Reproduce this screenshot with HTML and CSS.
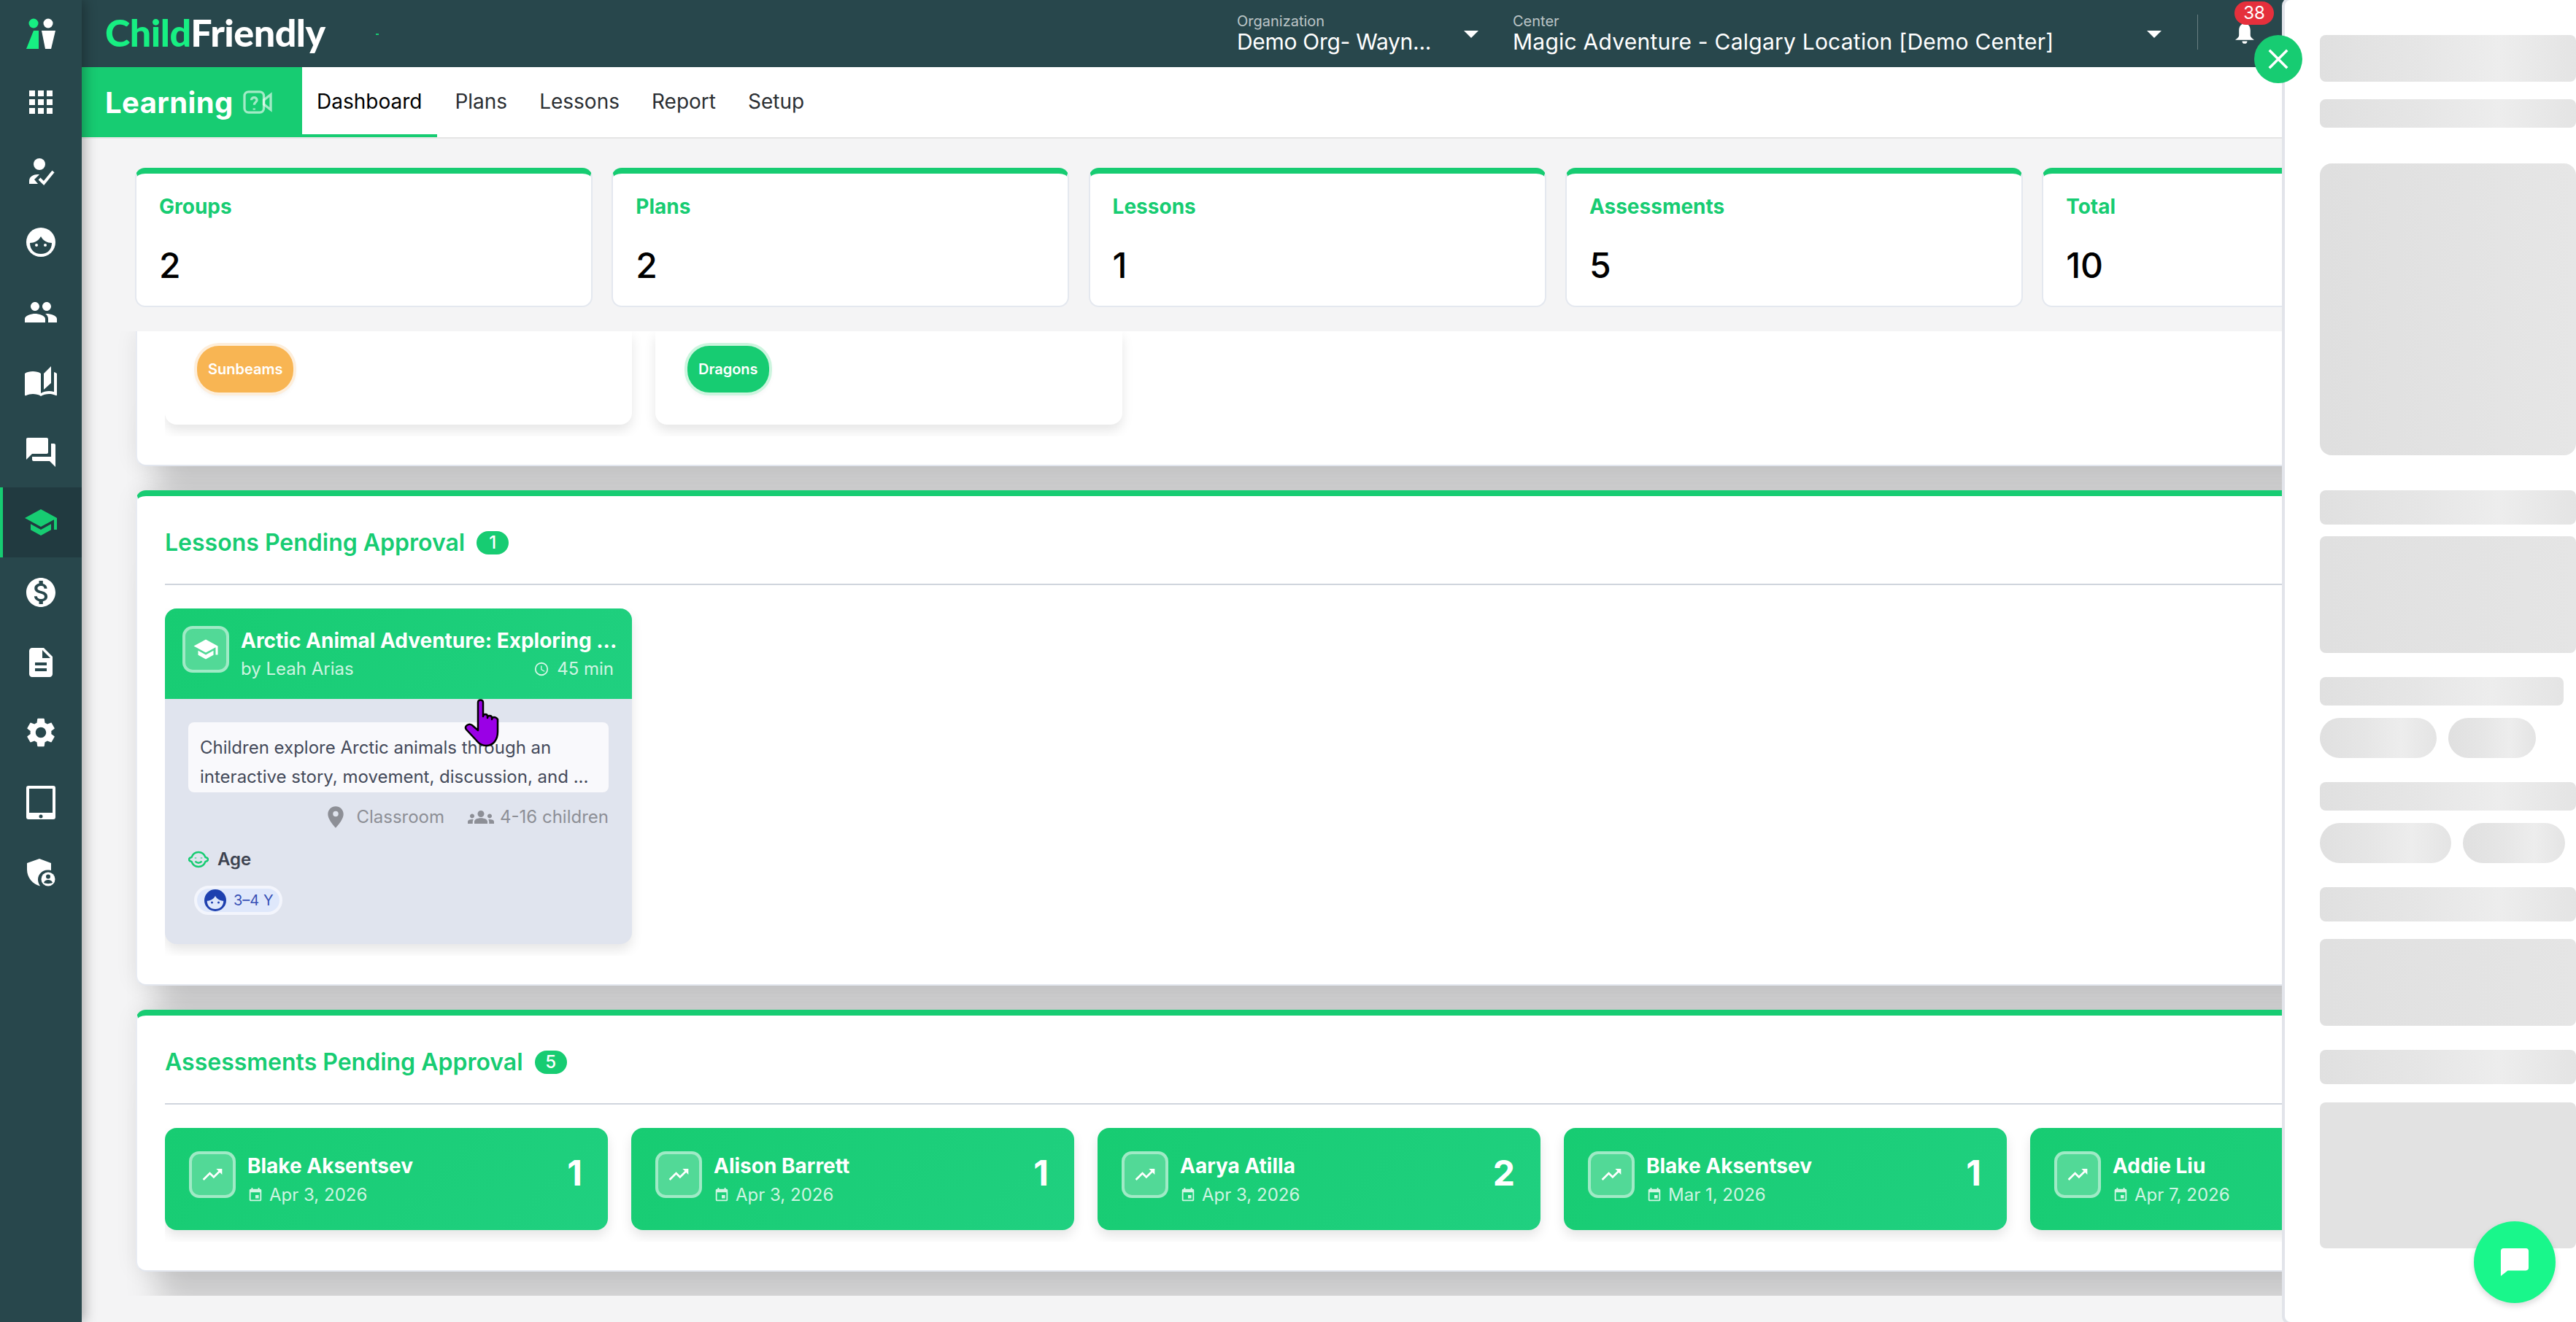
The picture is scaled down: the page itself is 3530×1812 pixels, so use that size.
FILE: index.html
```html
<!DOCTYPE html>
<html lang="en">
<head>
    <meta charset="UTF-8">
    <title>ChildFriendly - Learning Dashboard</title>
    <link rel="stylesheet" href="styles.css">
</head>
<body>
    <svg class="defs" aria-hidden="true">
        <symbol id="i-apps" viewBox="0 0 24 24"><path d="M4 8h4V4H4v4zm6 12h4v-4h-4v4zm-6 0h4v-4H4v4zm0-6h4v-4H4v4zm6 0h4v-4h-4v4zm6-10v4h4V4h-4zm-6 4h4V4h-4v4zm6 6h4v-4h-4v4zm0 6h4v-4h-4v4z"/></symbol>
        <symbol id="i-checkin" viewBox="0 0 40 40"><circle cx="18" cy="9" r="8"/><path d="M4 35v-3c0-6 6-9 12-9l2 .2-7 6.800 5 6H4z"/><path d="M18 29l6 6 13-16" fill="none" stroke="currentColor" stroke-width="4"/></symbol>
        <symbol id="i-face" viewBox="0 0 40 40"><ellipse cx="20" cy="20" rx="20" ry="20"/><path class="face-in" d="M5 21c6 0 12-3 15-9 3 6 9 9 15 9 0 9-6 15-15 15S5 30 5 21z"/><circle cx="14" cy="24" r="2"/><circle cx="26" cy="24" r="2"/></symbol>
        <symbol id="i-people" viewBox="0 0 24 24"><path d="M16 11c1.660 0 2.990-1.340 2.990-3S17.660 5 16 5c-1.660 0-3 1.340-3 3s1.340 3 3 3zm-8 0c1.660 0 2.990-1.340 2.990-3S9.660 5 8 5C6.340 5 5 6.340 5 8s1.340 3 3 3zm0 2c-2.330 0-7 1.170-7 3.500V19h14v-2.500c0-2.330-4.670-3.500-7-3.500zm8 0c-.29 0-.62.020-.97.050 1.160.84 1.970 1.970 1.970 3.450V19h6v-2.500c0-2.330-4.670-3.500-7-3.500z"/></symbol>
        <symbol id="i-book" viewBox="0 0 24 24"><path d="M19 1l-5 5v11l5-4.500V1zM1 6v14.650c0 .25.25.5.5.5.1 0 .15-.05.25-.05C3.100 20.450 5.050 20 6.500 20c1.950 0 4.050.4 5.500 1.500V6c-1.450-1.100-3.550-1.500-5.500-1.500S2.450 4.900 1 6zm22 13.500V6c-.6-.45-1.250-.75-2-1v13.500c-1.100-.35-2.300-.5-3.500-.5-1.700 0-4.150.65-5.500 1.500v2c1.350-.85 3.800-1.500 5.500-1.500 1.650 0 3.350.3 4.750 1.050.1.050.15.050.25.050.25 0 .5-.25.5-.5v-1.100z"/></symbol>
        <symbol id="i-forum" viewBox="0 0 24 24"><path d="M21 6h-2v9H6v2c0 .55.45 1 1 1h11l4 4V7c0-.55-.45-1-1-1zm-4 6V3c0-.55-.45-1-1-1H3c-.55 0-1 .45-1 1v14l4-4h10c.55 0 1-.45 1-1z"/></symbol>
        <symbol id="i-school" viewBox="0 0 24 24"><path d="M5 13.180v4L12 21l7-3.820v-4L12 17l-7-3.820zM12 3L1 9l11 6 9-4.910V17h2V9L12 3z"/></symbol>
        <symbol id="i-dollar" viewBox="0 0 24 24"><path d="M12 2C6.480 2 2 6.480 2 12s4.480 10 10 10 10-4.480 10-10S17.520 2 12 2zm1.410 16.090V20h-2.670v-1.930c-1.710-.36-3.160-1.460-3.270-3.400h1.960c.1 1.050.82 1.870 2.650 1.870 1.960 0 2.400-.98 2.400-1.590 0-.83-.44-1.610-2.670-2.140-2.480-.6-4.180-1.620-4.180-3.670 0-1.720 1.390-2.840 3.110-3.210V4h2.670v1.950c1.860.45 2.790 1.860 2.870 3.390H14.300c-.05-1.110-.64-1.870-2.220-1.870-1.500 0-2.400.68-2.400 1.640 0 .84.65 1.390 2.670 1.910s4.180 1.390 4.180 3.910c-.01 1.830-1.380 2.830-3.120 3.160z"/></symbol>
        <symbol id="i-doc" viewBox="0 0 24 24"><path d="M14 2H6c-1.100 0-1.990.9-1.990 2L4 20c0 1.100.89 2 1.990 2H18c1.100 0 2-.9 2-2V8l-6-6zm2 16H8v-2h8v2zm0-4H8v-2h8v2zm-3-5V3.500L18.500 9H13z"/></symbol>
        <symbol id="i-gear" viewBox="0 0 24 24"><path d="M19.140 12.940c.04-.3.060-.61.060-.94 0-.32-.02-.64-.07-.94l2.030-1.580c.18-.14.23-.41.12-.61l-1.920-3.320c-.12-.22-.37-.29-.59-.22l-2.390.96c-.5-.38-1.030-.7-1.620-.94l-.36-2.540c-.04-.24-.24-.41-.48-.41h-3.840c-.24 0-.43.17-.47.41l-.36 2.540c-.59.24-1.130.57-1.620.94l-2.390-.96c-.22-.08-.47 0-.59.22L2.740 8.870c-.12.21-.08.47.12.61l2.030 1.580c-.05.3-.09.63-.09.94s.02.64.07.94l-2.030 1.580c-.18.14-.23.41-.12.61l1.920 3.320c.12.22.37.29.59.22l2.390-.96c.5.38 1.030.7 1.620.94l.36 2.54c.05.24.24.41.48.41h3.840c.24 0 .44-.17.47-.41l.36-2.540c.59-.24 1.130-.56 1.620-.94l2.390.96c.22.08.47 0 .59-.22l1.920-3.320c.12-.22.07-.47-.12-.61l-2.010-1.580zM12 15.600c-1.980 0-3.600-1.620-3.600-3.600s1.620-3.600 3.600-3.600 3.600 1.620 3.600 3.600-1.620 3.600-3.600 3.600z"/></symbol>
        <symbol id="i-tablet" viewBox="0 0 40 48"><path fill-rule="evenodd" d="M3 1h34a3 3 0 0 1 3 3v40a3 3 0 0 1-3 3H3a3 3 0 0 1-3-3V4a3 3 0 0 1 3-3zm1 4v33h32V5H4zm16 35.500a2.500 2.500 0 1 0 0 5 2.500 2.500 0 0 0 0-5z"/></symbol>
        <symbol id="i-shield" viewBox="0 0 40 40"><path d="M18 1l16 6v10c-2-.5-3-.6-5-.6-7 0-13 6-13 13 0 3 1 6 3 9C9 36 1 27 1 16V7l17-6z"/><circle cx="30" cy="29" r="9.500"/><circle class="face-in" cx="30" cy="25.500" r="3"/><path class="face-in" d="M24 34c1-3 3-4 6-4s5 1 6 4c-3 1.500-9 1.500-12 0z"/></symbol>
        <symbol id="i-clock" viewBox="0 0 24 24"><path d="M12 2a10 10 0 1 0 0 20 10 10 0 0 0 0-20zm0 18a8 8 0 1 1 0-16 8 8 0 0 1 0 16zm.5-13H11v6l5.200 3.100.8-1.200-4.500-2.700V7z"/></symbol>
        <symbol id="i-pin" viewBox="0 0 24 24"><path d="M12 1C7.500 1 4 4.500 4 9c0 6 8 14 8 14s8-8 8-14c0-4.500-3.500-8-8-8zm0 10.500a2.800 2.800 0 1 1 0-5.600 2.800 2.800 0 0 1 0 5.600z"/></symbol>
        <symbol id="i-groups" viewBox="0 0 24 24"><path d="M12 12.750c1.630 0 3.070.39 4.240.9 1.080.48 1.760 1.560 1.760 2.730V18H6v-1.610c0-1.180.68-2.260 1.760-2.730 1.170-.52 2.610-.91 4.240-.91zM4 13c1.100 0 2-.9 2-2s-.9-2-2-2-2 .9-2 2 .9 2 2 2zm1.130 1.100c-.37-.06-.74-.1-1.130-.1-.99 0-1.930.21-2.780.58C.48 14.900 0 15.620 0 16.430V18h4.500v-1.610c0-.83.23-1.610.63-2.290zM20 13c1.100 0 2-.9 2-2s-.9-2-2-2-2 .9-2 2 .9 2 2 2zm4 3.430c0-.81-.48-1.530-1.220-1.850-.85-.37-1.790-.58-2.780-.58-.39 0-.76.040-1.130.1.4.68.63 1.460.63 2.290V18H24v-1.570zM12 6c1.660 0 3 1.340 3 3s-1.340 3-3 3-3-1.340-3-3 1.340-3 3-3z"/></symbol>
        <symbol id="i-event" viewBox="0 0 24 24"><path d="M17 12h-5v5h5v-5zM16 1v2H8V1H6v2H5c-1.100 0-2 .9-2 2v14c0 1.100.9 2 2 2h14c1.100 0 2-.9 2-2V5c0-1.100-.9-2-2-2h-1V1h-2zm3 18H5V8h14v11z"/></symbol>
        <symbol id="i-trend" viewBox="0 0 24 24"><path d="M16 6l2.290 2.290-4.880 4.880-4-4L2 16.590 3.410 18l6-6 4 4 6.300-6.290L22 12V6z"/></symbol>
    </svg>

    <aside class="sidebar">
        <div class="side-logo">
            <svg width="40" height="42" viewBox="0 0 40 42">
                <circle cx="10" cy="7" r="6.500" fill="#17ef82"/>
                <circle cx="30" cy="7" r="6.500" fill="#fff"/>
                <path d="M0 42L10 17h7v25z" fill="#17ef82"/>
                <path d="M21 17h19l-6 25h-8z" fill="#fff"/>
            </svg>
        </div>
        <a class="side-item"><svg class="ic-48"><use href="#i-apps"/></svg></a>
        <a class="side-item"><svg class="ic-40"><use href="#i-checkin"/></svg></a>
        <a class="side-item"><svg class="ic-40"><use href="#i-face"/></svg></a>
        <a class="side-item"><svg class="ic-48"><use href="#i-people"/></svg></a>
        <a class="side-item"><svg class="ic-48"><use href="#i-book"/></svg></a>
        <a class="side-item"><svg class="ic-48"><use href="#i-forum"/></svg></a>
        <a class="side-item active"><svg class="ic-48"><use href="#i-school"/></svg></a>
        <a class="side-item"><svg class="ic-48"><use href="#i-dollar"/></svg></a>
        <a class="side-item"><svg class="ic-48"><use href="#i-doc"/></svg></a>
        <a class="side-item"><svg class="ic-48"><use href="#i-gear"/></svg></a>
        <a class="side-item"><svg class="ic-tablet"><use href="#i-tablet"/></svg></a>
        <a class="side-item"><svg class="ic-40"><use href="#i-shield"/></svg></a>
    </aside>

    <div class="main">
        <header class="topbar">
            <div class="brand"><span class="brand-green">Child</span>Friendly</div>
            <span class="brand-speck"></span>
            <div class="selector selector-org">
                <div>
                    <div class="selector-label">Organization</div>
                    <div class="selector-value">Demo Org- Wayn...</div>
                </div>
                <span class="caret"></span>
            </div>
            <div class="selector selector-center">
                <div>
                    <div class="selector-label">Center</div>
                    <div class="selector-value">Magic Adventure - Calgary Location [Demo Center]</div>
                </div>
                <span class="caret"></span>
            </div>
            <div class="bell">
                <svg width="26" height="28" viewBox="0 0 30 32" fill="#fff"><path d="M15 0c6 0 9 5 9 11v8c0 3 3 5 6 7H0c3-2 6-4 6-7v-8C6 5 9 0 15 0z"/><path d="M11 28h8a4 4 0 0 1-8 0z"/></svg>
                <span class="bell-badge">38</span>
            </div>
        </header>

        <nav class="subnav">
            <div class="module">
                Learning
                <svg width="42" height="36" viewBox="0 0 42 38" fill="none" stroke="#fff" stroke-opacity=".6" stroke-width="3.500"><rect x="2" y="4" width="28" height="30" rx="6"/><path d="M40 8v22l-10-8v-6z"/><path d="M12 16c0-5 8-5 8 0 0 3-4 3-4 7M16 28v2"/></svg>
            </div>
            <a class="tab active">Dashboard</a>
            <a class="tab">Plans</a>
            <a class="tab">Lessons</a>
            <a class="tab">Report</a>
            <a class="tab">Setup</a>
        </nav>

        <div class="stats">
            <div class="stat-card"><div class="stat-label">Groups</div><div class="stat-value">2</div></div>
            <div class="stat-card"><div class="stat-label">Plans</div><div class="stat-value">2</div></div>
            <div class="stat-card"><div class="stat-label">Lessons</div><div class="stat-value">1</div></div>
            <div class="stat-card"><div class="stat-label">Assessments</div><div class="stat-value">5</div></div>
            <div class="stat-card"><div class="stat-label">Total</div><div class="stat-value">10</div></div>
        </div>

        <div class="scroll">
            <section class="panel panel-plans">
                <div class="card-row">
                    <div class="plan-card"><span class="pill pill-orange">Sunbeams</span></div>
                    <div class="plan-card"><span class="pill pill-green">Dragons</span></div>
                </div>
            </section>

            <section class="panel panel-top">
                <h2 class="panel-title">Lessons Pending Approval <span class="count">1</span></h2>
                <div class="card-row">
                    <div class="lesson-card">
                        <div class="lesson-head">
                            <span class="icon-box"><svg class="ic-36"><use href="#i-school"/></svg></span>
                            <div class="lesson-head-text">
                                <div class="lesson-title">Arctic Animal Adventure: Exploring ...</div>
                                <div class="lesson-sub">
                                    <span>by Leah Arias</span>
                                    <span class="lesson-time"><svg class="ic-22"><use href="#i-clock"/></svg>45 min</span>
                                </div>
                            </div>
                        </div>
                        <div class="lesson-body">
                            <p class="lesson-desc">Children explore Arctic animals through an interactive story, movement, discussion, and ...</p>
                            <div class="lesson-meta">
                                <span class="meta-item"><svg class="ic-32"><use href="#i-pin"/></svg>Classroom</span>
                                <span class="meta-item meta-kids"><svg class="ic-36"><use href="#i-groups"/></svg>4-16 children</span>
                            </div>
                            <div class="age-label">
                                <svg width="28" height="24" viewBox="0 0 28 24" fill="none" stroke="#17cc72" stroke-width="2.500"><path d="M14 2c5 0 8 3 9.500 7 2.500.5 3.500 1.500 3.500 3s-1 2.500-3.500 3c-1.500 4-4.500 7-9.500 7s-8-3-9.500-7C2 14.500 1 13.500 1 12s1-2.500 3.500-3C6 5 9 2 14 2z"/><path d="M9.500 14.500c2.500 3 6.500 3 9 0"/><path d="M10 9.500v1M18 9.500v1"/></svg>
                                Age
                            </div>
                            <span class="age-chip"><svg class="ic-30"><use href="#i-face"/></svg>3&#8211;4 Y</span>
                        </div>
                    </div>
                </div>
            </section>

            <section class="panel panel-top">
                <h2 class="panel-title">Assessments Pending Approval <span class="count">5</span></h2>
                <div class="card-row">
                    <div class="assess-card">
                        <span class="icon-box"><svg class="ic-32"><use href="#i-trend"/></svg></span>
                        <div class="assess-text"><div class="assess-name">Blake Aksentsev</div><div class="assess-date"><svg class="ic-22"><use href="#i-event"/></svg>Apr 3, 2026</div></div>
                        <div class="assess-num">1</div>
                    </div>
                    <div class="assess-card">
                        <span class="icon-box"><svg class="ic-32"><use href="#i-trend"/></svg></span>
                        <div class="assess-text"><div class="assess-name">Alison Barrett</div><div class="assess-date"><svg class="ic-22"><use href="#i-event"/></svg>Apr 3, 2026</div></div>
                        <div class="assess-num">1</div>
                    </div>
                    <div class="assess-card">
                        <span class="icon-box"><svg class="ic-32"><use href="#i-trend"/></svg></span>
                        <div class="assess-text"><div class="assess-name">Aarya Atilla</div><div class="assess-date"><svg class="ic-22"><use href="#i-event"/></svg>Apr 3, 2026</div></div>
                        <div class="assess-num">2</div>
                    </div>
                    <div class="assess-card">
                        <span class="icon-box"><svg class="ic-32"><use href="#i-trend"/></svg></span>
                        <div class="assess-text"><div class="assess-name">Blake Aksentsev</div><div class="assess-date"><svg class="ic-22"><use href="#i-event"/></svg>Mar 1, 2026</div></div>
                        <div class="assess-num">1</div>
                    </div>
                    <div class="assess-card">
                        <span class="icon-box"><svg class="ic-32"><use href="#i-trend"/></svg></span>
                        <div class="assess-text"><div class="assess-name">Addie Liu</div><div class="assess-date"><svg class="ic-22"><use href="#i-event"/></svg>Apr 7, 2026</div></div>
                        <div class="assess-num">1</div>
                    </div>
                </div>
            </section>
        </div>
    </div>

    <!-- loading drawer on the right -->
    <aside class="drawer">
        <div class="skel sk-64 mb-24"></div>
        <div class="skel sk-39 mb-49"></div>
        <div class="skel sk-hero mb-48"></div>
        <div class="skel sk-47 mb-16"></div>
        <div class="skel sk-160 mb-33"></div>
        <div class="skel sk-39 sk-short mb-17"></div>
        <div class="skel-pills mb-33">
            <div class="skel sk-pill w-160"></div>
            <div class="skel sk-pill w-120"></div>
        </div>
        <div class="skel sk-39 mb-17"></div>
        <div class="skel-pills mb-33">
            <div class="skel sk-pill w-180"></div>
            <div class="skel sk-pill w-140"></div>
        </div>
        <div class="skel sk-47 mb-24"></div>
        <div class="skel sk-119 mb-33"></div>
        <div class="skel sk-47 mb-25"></div>
        <div class="skel sk-200"></div>
    </aside>

    <button class="close-btn" aria-label="Close">
        <svg width="28" height="28" viewBox="0 0 32 32" stroke="#fff" stroke-width="4" fill="none"><path d="M2 2l28 28M30 2L2 30"/></svg>
    </button>
    <button class="chat-btn" aria-label="Chat">
        <svg width="40" height="40" viewBox="0 0 42 42" fill="#fff"><path d="M5 1h32a4 4 0 0 1 4 4v24a4 4 0 0 1-4 4H11L1 41V5a4 4 0 0 1 4-4z"/></svg>
    </button>

    <svg class="cursor" width="52" height="66" viewBox="0 0 52 66">
        <path d="M19 5q0-3.500 3.500-3.500T26 5v19q0-3 3-3t3 3v2q0-3 3-3t3 3v2q0-3 3-3t5 3v17c0 11-6 19-16 19-6 0-10-3-13-7L3 42q-2.500-3.500 1-6t7 0l8 7z" fill="#9a00e6" stroke="#000" stroke-width="2.500" stroke-linejoin="round"/>
    </svg>
</body>
</html>
```

FILE: styles.css
```css
* {
    box-sizing: border-box;
}
html, body {
    height: 100%;
}
body {
    margin: 0;
    display: flex;
    overflow: hidden;
    background-color: #f4f4f5;
    font-family: "Inter", "Liberation Sans", sans-serif;
    color: #212529;
}
.defs {
    display: none;
}
svg {
    flex: none;
}
use {
    fill: currentColor;
}
.face-in {
    fill: var(--face-in, #28474c);
}

/* icon sizes */
.ic-22 { width: 22px; height: 22px; }
.ic-30 { width: 30px; height: 30px; }
.ic-32 { width: 32px; height: 32px; }
.ic-36 { width: 36px; height: 36px; }
.ic-40 { width: 40px; height: 40px; }
.ic-48 { width: 48px; height: 48px; }
.ic-tablet { width: 40px; height: 48px; }

/* sidebar */
.sidebar {
    width: 112px;
    flex: none;
    background-color: #28474c;
    color: #fff;
    box-shadow: 4px 0 16px rgba(0, 0, 0, 0.3);
    z-index: 2;
}
.side-logo {
    height: 92px;
    display: flex;
    align-items: center;
    justify-content: center;
}
.side-item {
    height: 96px;
    display: flex;
    align-items: center;
    justify-content: center;
}
.side-item.active {
    background-color: #213a40;
    border-left: 4px solid #17cc72;
    padding-right: 4px;
    color: #17cc72;
}

/* top bar */
.main {
    flex: 1;
    min-width: 0;
    display: flex;
    flex-direction: column;
}
.topbar {
    height: 92px;
    flex: none;
    display: flex;
    align-items: center;
    padding: 0 441px 0 32px;
    background-color: #28474c;
    color: #fff;
}
.brand {
    font-family: "Lato", sans-serif;
    font-weight: 900;
    font-size: 52px;
    letter-spacing: -0.5px;
    line-height: 1;
    margin-top: -4px;
}
.brand-green {
    color: #17ef82;
}
.brand-speck {
    width: 4px;
    height: 2px;
    margin: 2px 0 0 69px;
    background-color: #17cc72;
}
.selector {
    display: flex;
    align-items: center;
    justify-content: space-between;
}
.selector-org {
    width: 331px;
    margin-left: auto;
    margin-right: 47px;
}
.selector-org .selector-value {
    letter-spacing: -0.3px;
}
.selector-center {
    width: 889px;
    margin-right: 49px;
}
.selector-center .selector-value {
    letter-spacing: 0.23px;
}
.selector-label {
    font-size: 20px;
    line-height: 24px;
    color: rgba(255, 255, 255, 0.7);
}
.selector-value {
    margin-top: -2px;
    font-size: 30px;
    line-height: 36px;
    white-space: nowrap;
}
.caret {
    width: 0;
    height: 0;
    margin-top: 2px;
    border-left: 10px solid transparent;
    border-right: 10px solid transparent;
    border-top: 10px solid #fff;
}
.bell {
    position: relative;
    padding-left: 51px;
    height: 48px;
    margin-top: -4px;
    display: flex;
    align-items: flex-end;
    border-left: 1px solid rgba(255, 255, 255, 0.3);
}
.bell svg {
    margin-bottom: 8px;
}
.bell-badge {
    position: absolute;
    left: 50px;
    top: -18px;
    width: 54px;
    height: 32px;
    border-radius: 16px;
    background-color: #e5303c;
    font-size: 24px;
    line-height: 32px;
    text-align: center;
}

/* module tabs */
.subnav {
    height: 98px;
    flex: none;
    display: flex;
    gap: 4px;
    background-color: #fff;
    border-bottom: 2px solid #e5e5e5;
}
.module {
    width: 302px;
    margin-right: -4px;
    display: flex;
    align-items: center;
    gap: 12px;
    padding-left: 32px;
    background-color: #17cc72;
    color: #fff;
    font-size: 40px;
    letter-spacing: 0.4px;
    font-weight: 700;
}
.tab {
    height: 96px;
    display: flex;
    align-items: center;
    padding: 2px 20px 0;
    font-size: 28px;
    color: #2b2f33;
    border-bottom: 4px solid transparent;
}
.tab.active {
    padding-right: 21px;
    color: #000;
    border-bottom-color: #17cc72;
}

/* stat cards */
.stats {
    flex: none;
    display: flex;
    gap: 26.3px;
    padding: 40px 0 33px 73px;
    overflow: hidden;
}
.stat-card {
    flex: 0 0 627px;
    height: 191px;
    padding: 23px 31px 0;
    background-color: #fff;
    border: 2px solid #e4e8ef;
    border-top: 8px solid #17cc72;
    border-radius: 14px;
}
.stat-label {
    font-size: 28px;
    line-height: 44px;
    font-weight: 650;
    color: #17cc72;
}
.stat-value {
    margin-top: 25px;
    font-size: 48px;
    line-height: 68px;
    font-weight: 500;
    color: #000;
}

/* scrolled content */
.scroll {
    flex: 1;
    min-height: 0;
    margin: 0 0 36px 40px;
    padding: 0 0 0 34px;
    overflow: hidden;
    display: flex;
    flex-direction: column;
    gap: 33px;
}
.panel {
    flex: none;
    padding: 0 34px 39px 38px;
    background-color: #fff;
    border-bottom: 2px solid #e2e6ee;
    border-left: 2px solid #e8ebf2;
    border-radius: 0 0 14px 14px;
    box-shadow: 0 80px 40px -30px rgba(0, 0, 0, 0.17), 0 0 30px rgba(0, 0, 0, 0.08);
}
.panel-plans {
    height: 185px;
    padding-bottom: 0;
}
.panel-top {
    border-top: 8px solid #17cc72;
    border-radius: 14px;
}
.panel-title {
    margin: 0 0 32px;
    padding: 44px 0 36px;
    display: flex;
    align-items: center;
    gap: 16px;
    border-bottom: 2px solid #d0d5dd;
    font-size: 32px;
    line-height: 40px;
    font-weight: 600;
    color: #17cc72;
}
.count {
    min-width: 44px;
    height: 32px;
    padding: 0 12px;
    border-radius: 16px;
    background-color: #17cc72;
    color: #fff;
    font-size: 24px;
    line-height: 32px;
    font-weight: 500;
    text-align: center;
}
.card-row {
    display: flex;
    gap: 32px;
    padding-bottom: 16px;
    overflow: hidden;
}

/* group cards, cut off by the scroll */
.plan-card {
    flex: 0 0 640px;
    height: 128px;
    padding: 20px 0 0 44px;
    background-color: #fff;
    border-radius: 0 0 16px 16px;
    box-shadow: 0 8px 16px rgba(0, 0, 0, 0.1);
}
.pill {
    display: inline-block;
    height: 64px;
    padding: 0 15px;
    border-radius: 30px;
    color: #fff;
    font-size: 20px;
    line-height: 64px;
    font-weight: 600;
}
.pill-orange {
    background-color: #f8b553;
    box-shadow: 0 0 0 4px #fdeedb, 0 4px 8px rgba(0, 0, 0, 0.08);
}
.pill-green {
    background-color: #17cc72;
    box-shadow: 0 0 0 4px #cdf5df, 0 4px 8px rgba(0, 0, 0, 0.08);
}

/* lesson card */
.lesson-card {
    flex: 0 0 640px;
    height: 460px;
    border-radius: 16px;
    overflow: hidden;
    background-color: #e0e4ee;
    box-shadow: 0 8px 16px rgba(0, 0, 0, 0.1);
}
.lesson-head {
    height: 124px;
    display: flex;
    align-items: flex-start;
    gap: 16px;
    padding: 24px 25px 0 24px;
    background: linear-gradient(135deg, #17cc72, #20d080);
    color: #fff;
}
.icon-box {
    width: 64px;
    height: 64px;
    flex: none;
    display: flex;
    align-items: center;
    justify-content: center;
    border: 4px solid rgba(255, 255, 255, 0.45);
    border-radius: 14px;
    background-color: rgba(255, 255, 255, 0.25);
    color: #fff;
}
.lesson-head-text {
    flex: 1;
    min-width: 0;
}
.lesson-title {
    font-size: 28px;
    line-height: 40px;
    font-weight: 650;
    white-space: nowrap;
}
.lesson-sub {
    display: flex;
    justify-content: space-between;
    margin-top: 1px;
    font-size: 24px;
    line-height: 36px;
    color: rgba(255, 255, 255, 0.8);
}
.lesson-time {
    display: flex;
    align-items: center;
    gap: 10px;
}
.lesson-body {
    padding: 32px 32px 0;
}
.lesson-desc {
    margin: 0;
    height: 96px;
    padding: 15px 16px 0;
    overflow: hidden;
    border-radius: 8px;
    background-color: #f9f9fc;
    font-size: 24px;
    line-height: 40px;
    color: #444a5a;
}
.lesson-meta {
    display: flex;
    justify-content: flex-end;
    gap: 32px;
    margin-top: 16px;
    font-size: 24px;
    line-height: 32px;
    color: #8d8f96;
}
.meta-item {
    display: flex;
    align-items: center;
    gap: 12px;
}
.meta-kids {
    gap: 8px;
}
.age-label {
    display: flex;
    align-items: center;
    gap: 12px;
    margin-top: 24px;
    font-size: 24px;
    line-height: 32px;
    font-weight: 600;
    color: #3d4350;
}
.age-chip {
    --face-in: #dfe8fb;
    display: inline-flex;
    align-items: center;
    gap: 10px;
    height: 40px;
    margin: 20px 0 0 8px;
    padding: 0 9px 0 10px;
    border: 4px solid #f3f5fc;
    border-radius: 20px;
    background-color: #dfe8fb;
    font-size: 20px;
    color: #3650b5;
}
.age-chip svg {
    color: #1e40af;
}

/* assessment cards */
.assess-card {
    flex: 0 0 607px;
    height: 140px;
    display: flex;
    align-items: flex-start;
    padding: 32px 35px 0 33px;
    border-radius: 16px;
    background: linear-gradient(135deg, #17cc72, #20d080);
    box-shadow: 0 8px 16px rgba(0, 0, 0, 0.1);
    color: #fff;
}
.assess-text {
    flex: 1;
    margin-left: 16px;
}
.assess-name {
    font-size: 28px;
    line-height: 40px;
    font-weight: 650;
}
.assess-date {
    display: flex;
    align-items: center;
    gap: 8px;
    font-size: 24px;
    line-height: 40px;
    color: rgba(255, 255, 255, 0.8);
}
.assess-num {
    font-size: 48px;
    line-height: 60px;
    font-weight: 700;
}

/* loading drawer */
.drawer {
    position: absolute;
    top: 0;
    bottom: 0;
    left: 3131px;
    right: 0;
    padding: 48px 0 0 48px;
    overflow: hidden;
    background-color: #fff;
    border-radius: 8px 0 0 8px;
    box-shadow: 0 0 0 4px #e2e4ea;
    z-index: 3;
}
.skel {
    border-radius: 8px;
    background: linear-gradient(90deg, #e0e0e0 0, #e6e6e6 40%, #ededed 70%, #e4e4e4 100%);
}
.sk-39 { height: 39px; }
.sk-47 { height: 47px; }
.sk-64 { height: 64px; }
.sk-119 { height: 119px; }
.sk-160 { height: 160px; }
.sk-200 { height: 200px; background: #e2e2e2; }
.sk-hero { height: 400px; border-radius: 16px; background: linear-gradient(90deg, #dfdfdf, #e6e6e6); }
.sk-119, .sk-160 { background: linear-gradient(90deg, #e0e0e0, #e5e5e5); }
.sk-short { width: 334px; }
.sk-pill { height: 55px; border-radius: 28px; }
.skel-pills { display: flex; gap: 16px; }
.w-120 { width: 120px; }
.w-140 { width: 140px; }
.w-160 { width: 160px; }
.w-180 { width: 180px; }
.mb-16 { margin-bottom: 16px; }
.mb-17 { margin-bottom: 17px; }
.mb-24 { margin-bottom: 24px; }
.mb-25 { margin-bottom: 25px; }
.mb-33 { margin-bottom: 33px; }
.mb-48 { margin-bottom: 48px; }
.mb-49 { margin-bottom: 49px; }

/* floating buttons */
.close-btn {
    position: absolute;
    left: 3089px;
    top: 48px;
    width: 66px;
    height: 66px;
    display: flex;
    align-items: center;
    justify-content: center;
    padding: 0;
    border: none;
    border-radius: 50%;
    background-color: #17cc72;
    z-index: 4;
}
.chat-btn {
    position: absolute;
    left: 3390px;
    top: 1674px;
    width: 112px;
    height: 112px;
    display: flex;
    align-items: center;
    justify-content: center;
    padding: 0;
    border: none;
    border-radius: 50%;
    background-color: #19f78b;
    box-shadow: 0 4px 8px rgba(0, 0, 0, 0.15);
    z-index: 4;
}
.cursor {
    position: absolute;
    left: 636px;
    top: 958px;
    z-index: 5;
}
```
